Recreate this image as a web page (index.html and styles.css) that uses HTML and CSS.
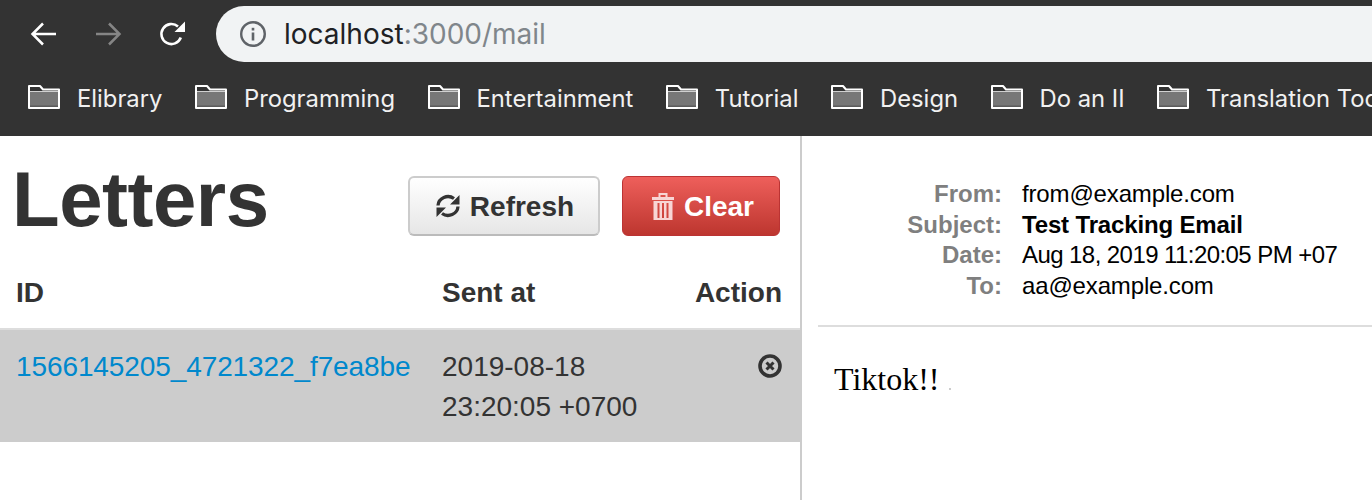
FILE: index.html
```html
<!DOCTYPE html>
<html>
<head>
<meta charset="utf-8">
<link rel="stylesheet" href="styles.css">
<title>Letters</title>
</head>
<body>
<svg class="defs" width="0" height="0">
  <symbol id="folder" viewBox="0 0 32 24">
    <path d="M1 1h11l3 3.500h16V23H1z" fill="#333"/>
    <path d="M2 7h28v15H2z" fill="#777"/>
    <path d="M2 6h28v1H2z" fill="#d0d0d0"/>
    <path d="M2 20.500h28V22H2z" fill="#5c5c5c"/>
    <path d="M1 1h11l3 3.500h16V23H1z" fill="none" stroke="#fff" stroke-width="2" stroke-linejoin="round"/>
  </symbol>
</svg>
<header class="chrome">
  <div class="toolbar">
    <svg class="nav nav-back" viewBox="0 0 28 26"><path d="M26 13H3M13 2.500 2.500 13 13 23.500" fill="none" stroke="#fff" stroke-width="2.500"/></svg>
    <svg class="nav nav-fwd" viewBox="0 0 28 26"><path d="M2 13h23M15 2.500 25.500 13 15 23.500" fill="none" stroke="#858585" stroke-width="2.500"/></svg>
    <svg class="nav nav-reload" viewBox="0 0 28 28"><path d="M22.800 17.500A10 10 0 1 1 20 6.500" fill="none" stroke="#fff" stroke-width="2.600"/><path d="M27 1.500V12H16.500z" fill="#fff"/></svg>
    <div class="omnibox">
      <svg class="info" viewBox="0 0 28 28"><circle cx="14" cy="14" r="11.800" fill="none" stroke="#5f6368" stroke-width="2.400"/><rect x="12.700" y="12.500" width="2.600" height="8" fill="#5f6368"/><rect x="12.700" y="7.800" width="2.600" height="2.700" fill="#5f6368"/></svg>
      <span class="url">localhost<span class="url-dim">:3000/mail</span></span>
    </div>
  </div>
  <nav class="bookmarks">
    <a class="bm"><svg class="folder"><use href="#folder"/></svg>Elibrary</a>
    <a class="bm"><svg class="folder"><use href="#folder"/></svg>Programming</a>
    <a class="bm"><svg class="folder"><use href="#folder"/></svg>Entertainment</a>
    <a class="bm"><svg class="folder"><use href="#folder"/></svg>Tutorial</a>
    <a class="bm"><svg class="folder"><use href="#folder"/></svg>Design</a>
    <a class="bm"><svg class="folder"><use href="#folder"/></svg>Do an II</a>
    <a class="bm"><svg class="folder"><use href="#folder"/></svg>Translation Tool</a>
  </nav>
</header>
<main class="app">
  <section class="list">
    <div class="list-head">
      <h1 class="title">Letters</h1>
      <div class="actions">
        <button class="btn btn-light">
          <svg class="btn-icon icon-refresh" viewBox="0 0 26 24"><path d="M3 11.500A10 9.500 0 0 1 19 4.500M23 12.500A10 9.500 0 0 1 7 19.500" fill="none" stroke="#333" stroke-width="3.300"/><path d="M24.500 1v9.500H15zM1.500 23v-9.500H11z" fill="#333"/></svg><span class="label">Refresh</span>
        </button>
        <button class="btn btn-red">
          <svg class="btn-icon icon-trash" viewBox="0 0 22 27"><path d="M0 4h6.500V0h9v4H22v3H0zM8.500 4h5V2h-5zM1.500 8h19v19h-19zM5.500 10v15h2V10zM10 10v15h2V10zM14.500 10v15h2V10z" fill="#f8d5d5" fill-rule="evenodd"/></svg><span class="label">Clear</span>
        </button>
      </div>
    </div>
    <div class="table-head">
      <div class="col-id">ID</div>
      <div class="col-sent">Sent at</div>
      <div class="col-act">Action</div>
    </div>
    <div class="row">
      <div class="col-id"><a class="link">1566145205_4721322_f7ea8be</a></div>
      <div class="col-sent">2019-08-18<br>23:20:05 +0700</div>
      <div class="col-act">
        <svg class="del" viewBox="0 0 24 24"><circle cx="12" cy="12" r="10" fill="none" stroke="#333" stroke-width="3.600"/><path d="M8.500 8.500l7 7M15.500 8.500l-7 7" stroke="#333" stroke-width="3"/></svg>
      </div>
    </div>
  </section>
  <section class="preview">
    <dl class="meta">
      <dt>From:</dt><dd>from@example.com</dd>
      <dt>Subject:</dt><dd class="strong">Test Tracking Email</dd>
      <dt>Date:</dt><dd class="date">Aug 18, 2019 11:20:05 PM +07</dd>
      <dt>To:</dt><dd>aa@example.com</dd>
    </dl>
    <div class="body-text">Tiktok!!<span class="pixel"></span></div>
  </section>
</main>
</body>
</html>
```
FILE: styles.css
```css
* { box-sizing: border-box; }
html, body { margin: 0; padding: 0; height: 500px; overflow: hidden; background: #fff; }
body { font-family: "Liberation Sans", Arial, sans-serif; color: #333; }
.defs { position: absolute; }

.chrome { height: 136px; background: #333; overflow: hidden; white-space: nowrap; }
.toolbar { display: flex; align-items: center; height: 68px; padding: 6px 0 6px 30px; }
.nav { flex: none; display: block; }
.nav-back { width: 28px; height: 26px; }
.nav-fwd { width: 28px; height: 26px; margin-left: 36px; }
.nav-reload { width: 28px; height: 28px; margin-left: 36px; }
.omnibox { flex: 1; height: 56px; margin-left: 30px; background: #f1f3f4; border-radius: 28px 0 0 28px; display: flex; align-items: center; padding-left: 23px; }
.info { width: 28px; height: 28px; flex: none; }
.url { margin-left: 17px; font: 28px/32px Inter, "Noto Sans", sans-serif; color: #202124; }
.url-dim { color: #80868b; }

.bookmarks { display: flex; height: 68px; padding: 17px 0 0 28px; gap: 32.500px; }
.bm { display: flex; align-items: center; height: 28px; font: 23.800px/28px Inter, "Noto Sans", sans-serif; color: #f1f1f1; }
.folder { width: 32px; height: 24px; margin: 0 17px 4px 0; flex: none; }

.app { display: flex; height: 364px; }
.list { width: 802px; flex: none; border-right: 2px solid #ccc; }
.list-head { display: flex; justify-content: space-between; height: 124px; padding: 0 20px 0 12px; }
.title { margin: 17px 0 0; font-size: 78px; line-height: 92px; font-weight: 700; color: #333; letter-spacing: -0.500px; }
.actions { display: flex; gap: 22px; padding-top: 40px; }
.btn { display: flex; align-items: center; justify-content: center; height: 60px; font: 700 28px/34px "Liberation Sans", Arial, sans-serif; border-radius: 6px; padding: 0; }
.btn-light { width: 192px; padding-left: 1px; color: #333; border: 2px solid #ccc; border-bottom-color: #bbb; background: linear-gradient(#fff, #e6e6e6); }
.btn-red { width: 158px; padding-left: 4px; color: #fff; border: 1px solid #b33; background: linear-gradient(#ee5f5b, #bd362f); }
.label { padding-top: 2px; }
.btn-icon { flex: none; }
.icon-refresh { width: 26px; height: 24px; margin-right: 9px; }
.icon-trash { width: 22px; height: 27px; margin-right: 10px; }

.table-head { display: flex; height: 70px; padding-top: 16px; font-size: 28px; line-height: 34px; font-weight: 700; border-bottom: 2px solid #ddd; }
.col-id { width: 442px; padding-left: 16px; flex: none; }
.col-sent { width: 240px; flex: none; }
.col-act { flex: 1; min-width: 0; text-align: right; padding-right: 18px; }
.row { display: flex; height: 112px; padding-top: 17px; background: #ccc; font-size: 28px; line-height: 40px; }
.link { color: #08c; letter-spacing: -0.100px; white-space: nowrap; }
.del { width: 24px; height: 24px; display: block; margin: 7px 0 0 auto; }

.preview { flex: 1; min-width: 0; padding: 43px 0 0 16px; }
.meta { display: grid; grid-template-columns: 168px 1fr; grid-auto-rows: 30.500px; column-gap: 20px; margin: 0 0 0 16px; font-size: 24px; line-height: 30px; color: #000; height: 146px; }
.meta dt { text-align: right; font-weight: 700; color: #7f7f7f; }
.meta dd { margin: 0; white-space: nowrap; letter-spacing: -0.150px; }
.meta .date { letter-spacing: -0.570px; }
.strong { font-weight: 700; }
.body-text { font: 32px/38px "Liberation Serif", "Times New Roman", serif; color: #000; border-top: 2px solid #ddd; padding: 33px 0 0 16px; }
.pixel { display: inline-block; width: 2px; height: 2px; margin-left: 9px; background: #ccc; }
```
